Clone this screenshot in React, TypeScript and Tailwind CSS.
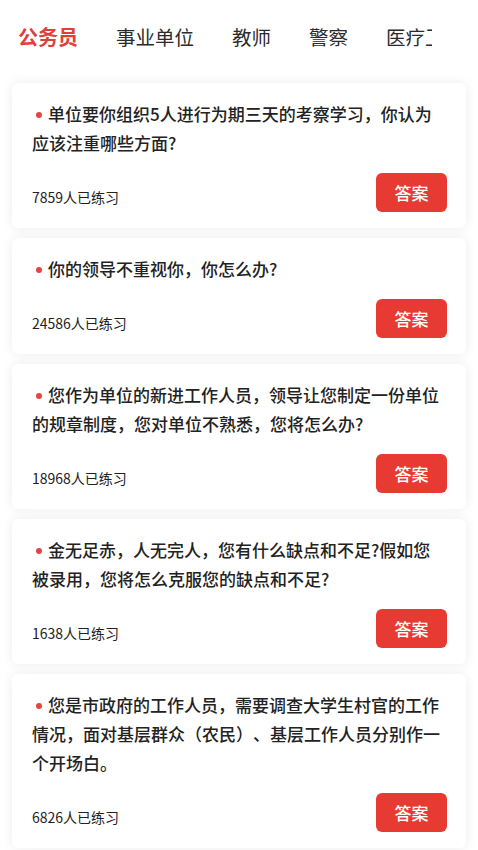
const TABS = ["公务员", "事业单位", "教师", "警察", "医疗卫生"];

type Question = {
  id: number;
  text: string;
  count: number;
};

const QUESTIONS: Question[] = [
  { id: 1, text: "单位要你组织5人进行为期三天的考察学习，你认为应该注重哪些方面?", count: 7859 },
  { id: 2, text: "你的领导不重视你，你怎么办?", count: 24586 },
  { id: 3, text: "您作为单位的新进工作人员，领导让您制定一份单位的规章制度，您对单位不熟悉，您将怎么办?", count: 18968 },
  { id: 4, text: "金无足赤，人无完人，您有什么缺点和不足?假如您被录用，您将怎么克服您的缺点和不足?", count: 1638 },
  { id: 5, text: "您是市政府的工作人员，需要调查大学生村官的工作情况，面对基层群众（农民）、基层工作人员分别作一个开场白。", count: 6826 },
];

function QuestionCard({ q }: { q: Question }) {
  return (
    <div className="rounded-md bg-white pb-4 pl-5 pr-[19px] pt-4 shadow-[0_0_12px_rgba(0,0,0,0.08)]">
      <p className="pr-[2px] text-[17px] font-medium leading-[29px] text-[#222] [text-spacing-trim:space-all]">
        <span className="mb-[3px] ml-1 mr-[6px] inline-block h-[6px] w-[6px] rounded-full bg-[#e5453f] align-middle" />
        {q.text}
      </p>
      <div className="mt-4 flex items-end justify-between">
        <span className="pb-[5px] text-[14px] leading-5 text-[#222]">{q.count}人已练习</span>
        <button
          type="button"
          className="flex h-[39px] w-[71px] items-center justify-center rounded-md bg-[#e73a33] text-[17px] font-medium text-white"
        >
          答案
        </button>
      </div>
    </div>
  );
}

export default function App() {
  return (
    <div
      className="min-h-[850px] w-[478px] overflow-hidden bg-white"
      style={{ fontFamily: '"Noto Sans CJK SC", "Noto Sans", sans-serif' }}
    >
      {/* tabs */}
      <div className="flex h-[74px] items-center pl-[18px]">
        <div className="flex w-[414px] gap-[38px] overflow-hidden whitespace-nowrap">
          {TABS.map((t, i) => (
            <span
              key={t}
              className={
                i === 0
                  ? "shrink-0 text-[20px] font-bold leading-7 text-[#e0403c]"
                  : "shrink-0 text-[19.5px] leading-7 text-[#2b2b2b]"
              }
            >
              {t}
            </span>
          ))}
        </div>
      </div>

      {/* list */}
      <div className="flex flex-col gap-[10px] px-3 pt-[9px]">
        {QUESTIONS.map((q) => (
          <QuestionCard key={q.id} q={q} />
        ))}
      </div>
    </div>
  );
}
